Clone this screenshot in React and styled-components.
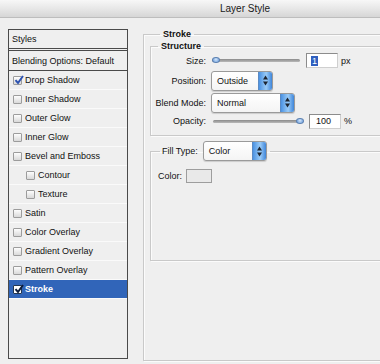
import React from "react"
import styled, { createGlobalStyle } from "styled-components"

const GlobalStyle = createGlobalStyle`
    html, body {
        margin: 0;
        padding: 0;
        background: #efefef;
    }
    body {
        font: 9px "Liberation Sans", Arial, sans-serif;
        color: #111;
    }
`

const Window = styled.div`
    width: 380px;
    height: 364px;
    overflow: hidden;
    background: #efefef;
`

const TitleBar = styled.div`
    height: 17px;
    border-bottom: 1px solid #bdbdbd;
    background: linear-gradient(#f7f7f7, #e4e4e4 60%, #d6d6d6);
    display: flex;
    align-items: center;
    padding-left: 220px;
    font-size: 10px;
    color: #1a1a1a;
`

const Body = styled.div`
    display: flex;
    align-items: flex-start;
    gap: 15px;
    padding: 11px 0 0 8px;
`

const StyleList = styled.div`
    flex: none;
    width: 120px;
    height: 330px;
    box-sizing: border-box;
    border: 1px solid #4a4a4a;
    background: #efefef;
    display: flex;
    flex-direction: column;
`

const HeaderRow = styled.div`
    height: ${p => p.$h}px;
    border-bottom: ${p => p.$double ? "3px double #4a4a4a" : "1px solid #4a4a4a"};
    display: flex;
    align-items: center;
    padding-left: 3px;
`

const StyleRow = styled.div`
    height: 18px;
    border-bottom: 1px solid #fafafa;
    display: flex;
    align-items: center;
    gap: 3px;
    padding-left: ${p => (p.$indent ? 17 : 4)}px;
    background: ${p => (p.$active ? "#3165b9" : "transparent")};
    color: ${p => (p.$active ? "#fff" : "#111")};
    font-weight: ${p => (p.$active ? 700 : 400)};
`

const Box = styled.span`
    width: 9px;
    height: 9px;
    box-sizing: border-box;
    border: 1px solid ${p => (p.$dark ? "#24364f" : "#9c9c9c")};
    border-radius: 1px;
    background: ${p => (p.$dark ? "#fff" : "linear-gradient(#fdfdfd, #d9d9d9)")};
    position: relative;
    flex: none;

    svg {
        position: absolute;
        left: 0;
        top: -2px;
    }
`

const Group = styled.fieldset`
    flex: none;
    margin: 0;
    padding: ${p => p.$pad};
    min-width: 0;
    width: ${p => p.$w}px;
    border: 1px solid #c9c9c9;
    box-shadow: inset 1px 1px 0 #fbfbfb, 1px 1px 0 #fbfbfb;
    box-sizing: border-box;
`

const Legend = styled.legend`
    margin-left: ${p => p.$ml}px;
    padding: 0 3px;
    line-height: 11px;
    font-weight: 700;
    display: flex;
    align-items: center;
    gap: 5px;
`

const PlainLegend = styled(Legend)`
    font-weight: 400;
    padding: 0 3px 0 2px;
`

const FieldRow = styled.div`
    height: ${p => p.$h}px;
    display: flex;
    align-items: center;
`

const Label = styled.span`
    width: ${p => p.$w || 55}px;
    text-align: ${p => (p.$left ? "left" : "right")};
    padding-left: ${p => p.$pl || 0}px;
    margin-right: 5px;
    flex: none;
`

const Track = styled.div`
    width: ${p => p.$w}px;
    height: 3px;
    margin-left: ${p => p.$ml || 0}px;
    margin-right: 6px;
    border-radius: 2px;
    background: linear-gradient(#8a8a8a, #b9b9b9);
    position: relative;
`

const Thumb = styled.span`
    position: absolute;
    top: -2px;
    left: ${p => p.$at}px;
    width: 8px;
    height: 6px;
    border-radius: 50%;
    background: radial-gradient(circle at 50% 35%, #d6e8fb, #5f94d6);
    border: 1px solid #5a7fb0;
    box-sizing: border-box;
`

const NumberBox = styled.div`
    width: 32px;
    height: 15px;
    box-sizing: border-box;
    border: 1px solid #8c8c8c;
    border-right-color: #cfcfcf;
    border-bottom-color: #cfcfcf;
    background: #fff;
    display: flex;
    align-items: center;
    padding-left: ${p => (p.$sel ? 4 : 6)}px;
    margin-right: 3px;
`

const Selected = styled.span`
    background: #2f5fbf;
    color: #fff;
    line-height: 10px;
    padding: 0 1px;
`

const Select = styled.div`
    width: ${p => p.$w}px;
    height: ${p => p.$h || 20}px;
    box-sizing: border-box;
    border: 1px solid #9a9a9a;
    border-radius: 3px;
    background: linear-gradient(#ffffff, #f4f4f4);
    box-shadow: 0 1px 1px rgba(0, 0, 0, 0.15);
    display: flex;
    align-items: center;
    overflow: hidden;
    font-weight: 400;
`

const SelectText = styled.span`
    flex: 1;
    padding-left: 5px;
`

const SelectButton = styled.span`
    width: 13px;
    align-self: stretch;
    background: linear-gradient(90deg, #4b92e2, #9acbf7 55%, #3f86da);
    border-left: 1px solid #5a8ac4;
    display: flex;
    align-items: center;
    justify-content: center;
`

const Swatch = styled.div`
    width: 26px;
    height: 14px;
    box-sizing: border-box;
    border: 1px solid #9d9d9d;
    background: #e9e9e9;
`

function Check({ dark }) {
    return (
        <svg width="10" height="10" viewBox="0 0 10 10">
            <path
                d="M1.5 5.2 L4 8 L9 1"
                fill="none"
                stroke={dark ? "#0d1c3a" : "#2d52b0"}
                strokeWidth="2"
            />
        </svg>
    )
}

function Arrows() {
    return (
        <svg width="5" height="11" viewBox="0 0 5 11">
            <path d="M2.5 0.5 L5 4.5 L0 4.5 Z M2.5 10.5 L5 6.5 L0 6.5 Z" fill="#1c2430" />
        </svg>
    )
}

function Checkbox({ checked, dark }) {
    return (
        <Box $dark={dark}>{checked && <Check dark={dark} />}</Box>
    )
}

function Dropdown({ value, w, h }) {
    return (
        <Select $w={w} $h={h}>
            <SelectText>{value}</SelectText>
            <SelectButton>
                <Arrows />
            </SelectButton>
        </Select>
    )
}

const effects = [
    { name: "Drop Shadow", checked: true },
    { name: "Inner Shadow" },
    { name: "Outer Glow" },
    { name: "Inner Glow" },
    { name: "Bevel and Emboss" },
    { name: "Contour", indent: true },
    { name: "Texture", indent: true },
    { name: "Satin" },
    { name: "Color Overlay" },
    { name: "Gradient Overlay" },
    { name: "Pattern Overlay" },
    { name: "Stroke", checked: true, active: true },
]

export default function App() {
    return (
        <Window>
            <GlobalStyle />
            <TitleBar>Layer Style</TitleBar>
            <Body>
                <StyleList>
                    <HeaderRow $h={18} $double>Styles</HeaderRow>
                    <HeaderRow $h={19}>Blending Options: Default</HeaderRow>
                    {effects.map(effect => (
                        <StyleRow
                            key={effect.name}
                            $indent={effect.indent}
                            $active={effect.active}
                        >
                            <Checkbox checked={effect.checked} dark={effect.active} />
                            {effect.name}
                        </StyleRow>
                    ))}
                </StyleList>

                <Group $w={262} $pad="1px 0 99px 6px">
                    <Legend $ml={10}>Stroke</Legend>
                    <Group $w={250} $pad="0 0 6px 0">
                        <Legend $ml={7}>Structure</Legend>
                        <FieldRow $h={17}>
                            <Label>Size:</Label>
                            <Track $w={88} $ml={1}>
                                <Thumb $at={0} />
                            </Track>
                            <NumberBox $sel>
                                <Selected>1</Selected>
                            </NumberBox>
                            px
                        </FieldRow>
                        <FieldRow $h={23}>
                            <Label>Position:</Label>
                            <Dropdown value="Outside" w={62} />
                        </FieldRow>
                        <FieldRow $h={21}>
                            <Label>Blend Mode:</Label>
                            <Dropdown value="Normal" w={84} />
                        </FieldRow>
                        <FieldRow $h={16}>
                            <Label>Opacity:</Label>
                            <Track $w={90} $ml={2}>
                                <Thumb $at={83} />
                            </Track>
                            <NumberBox>100</NumberBox>
                            %
                        </FieldRow>
                    </Group>

                    <Group $w={250} $pad="8px 0 77px 0" style={{ marginTop: 5 }}>
                        <PlainLegend $ml={9}>
                            Fill Type:
                            <Dropdown value="Color" w={64} />
                        </PlainLegend>
                        <FieldRow $h={14}>
                            <Label $w={23} $left $pl={7}>Color:</Label>
                            <Swatch />
                        </FieldRow>
                    </Group>
                </Group>
            </Body>
        </Window>
    )
}
